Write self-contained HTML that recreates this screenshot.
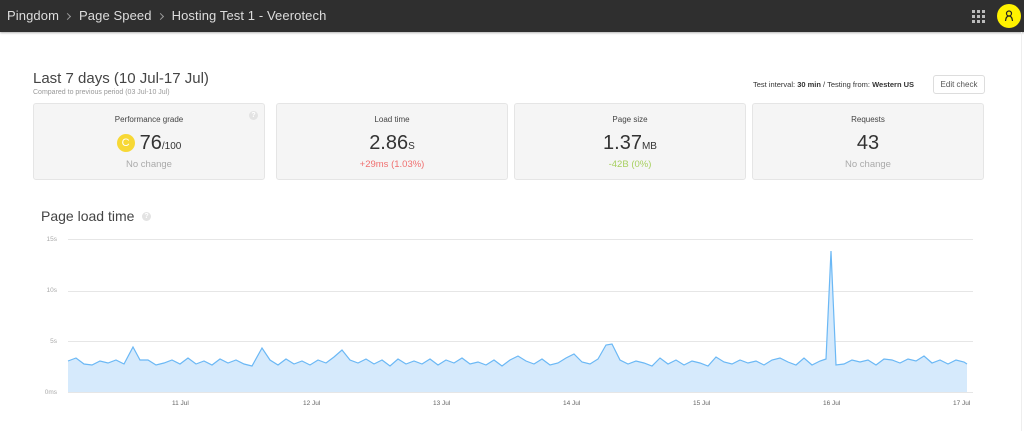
<!DOCTYPE html>
<html><head><meta charset="utf-8"><style>
*{margin:0;padding:0;box-sizing:border-box}
body{width:1024px;height:431px;overflow:hidden;background:#fff;font-family:"Liberation Sans",sans-serif;position:relative}
.top{position:absolute;left:0;top:0;width:1024px;height:32px;background:#2f2f2f;box-shadow:0 1px 2px rgba(0,0,0,.3)}
.crumb{position:absolute;left:7px;top:8px;font-size:13px;color:#ddd;letter-spacing:.1px}
.crumb span.s{display:inline-block;width:5px;height:5px;border-top:1px solid #999;border-right:1px solid #999;transform:rotate(45deg);margin:0 9px 1px 6px;vertical-align:middle}
.grid{position:absolute;left:972px;top:10px;width:13px;height:13px}
.grid i{position:absolute;width:3px;height:3px;background:#bbb}
.av{position:absolute;left:997px;top:4px;width:24px;height:24px;border-radius:50%;background:#fff200}
.t1{position:absolute;left:33px;top:70px;font-size:15px;color:#444}
.t2{position:absolute;left:33px;top:89px;font-size:7px;color:#999}
.ti{position:absolute;left:753px;top:80px;font-size:7.5px;color:#333}
.btn{position:absolute;left:933px;top:75px;width:52px;height:19px;border:1px solid #ddd;border-radius:3px;font-size:8px;color:#555;text-align:center;line-height:17px}
.card{position:absolute;top:103px;width:232px;height:77px;background:#f5f5f5;border:1px solid #e5e5e5;border-radius:3px;text-align:center}
.card .h{position:absolute;top:11px;width:100%;font-size:8px;color:#444}
.card .v{position:absolute;top:28px;width:100%;font-size:20px;color:#333}
.card .v small{font-size:10px}
.card .c{position:absolute;top:55px;width:100%;font-size:9.5px;color:#aaa}
.plt{position:absolute;left:41px;top:208px;font-size:14px;color:#444}
.q{position:absolute;width:9px;height:9px;border-radius:50%;background:#e3e3e3;color:#fff;font-size:7px;font-weight:bold;line-height:9px;text-align:center}
.yl{position:absolute;font-size:6.5px;color:#aaa;right:967px}
.xl{position:absolute;top:400px;font-size:6.5px;color:#666}
</style></head><body>
<div class="top">
<div class="crumb">Pingdom<span class="s"></span>Page Speed<span class="s"></span>Hosting Test 1 - Veerotech</div>
<div class="grid"><i style="left:0;top:0"></i><i style="left:5px;top:0"></i><i style="left:10px;top:0"></i><i style="left:0;top:5px"></i><i style="left:5px;top:5px"></i><i style="left:10px;top:5px"></i><i style="left:0;top:10px"></i><i style="left:5px;top:10px"></i><i style="left:10px;top:10px"></i></div>
<div class="av"><svg width="24" height="24"><circle cx="12" cy="9.5" r="2.5" fill="none" stroke="#222" stroke-width="1.2"/><path d="M8.5 17 Q9 12 12 12 Q15 12 15.5 17" fill="none" stroke="#222" stroke-width="1.2"/></svg></div>
</div>
<div style="position:absolute;left:1021px;top:32px;width:1px;height:399px;background:#eee"></div>
<div class="t1">Last 7 days (10 Jul-17 Jul)</div>
<div class="t2">Compared to previous period (03 Jul-10 Jul)</div>
<div class="ti">Test interval: <b>30 min</b> / Testing from: <b>Western US</b></div>
<div class="btn">Edit check</div>
<div class="card" style="left:33px"><div class="h">Performance grade</div>
<div class="q" style="right:6px;top:7px">?</div>
<div class="v"><span style="display:inline-block;width:18px;height:18px;border-radius:50%;background:#f7d835;color:#fff;font-size:11px;line-height:18px;vertical-align:3px;margin-right:5px">C</span>76<small>/100</small></div>
<div class="c">No change</div></div>
<div class="card" style="left:276px"><div class="h">Load time</div><div class="v">2.86<small>S</small></div><div class="c" style="color:#f07070">+29ms (1.03%)</div></div>
<div class="card" style="left:514px"><div class="h">Page size</div><div class="v">1.37<small>MB</small></div><div class="c" style="color:#a8d060">-42B (0%)</div></div>
<div class="card" style="left:752px"><div class="h">Requests</div><div class="v">43</div><div class="c">No change</div></div>
<div class="plt">Page load time</div><div class="q" style="left:142px;top:212px">?</div>
<div class="yl" style="top:236px">15s</div><div class="yl" style="top:287px">10s</div><div class="yl" style="top:338px">5s</div><div class="yl" style="top:389px">0ms</div>
<svg style="position:absolute;left:0;top:0" width="1024" height="431">
<g stroke="#e6e6e6" stroke-width="1"><line x1="68" x2="973" y1="239.5" y2="239.5"/><line x1="68" x2="973" y1="291.5" y2="291.5"/><line x1="68" x2="973" y1="341.5" y2="341.5"/><line x1="68" x2="973" y1="392.5" y2="392.5"/></g>
<polygon fill="#d6eafc" points="68,392 68,361 76,358 84,364 92,365 100,361 108,363 116,360 124,364 133,347 140,360 148,360 156,365 164,363 172,360 180,364 188,358 196,364 204,361 212,365 220,359 228,363 236,360 244,364 252,366 262,348 270,360 278,365 286,359 294,364 302,361 310,365 318,360 326,363 334,357 342,350 350,360 358,363 366,359 374,364 382,360 390,366 398,359 406,364 414,361 422,364 430,359 438,365 446,360 454,363 462,358 470,364 478,362 486,365 494,360 502,366 510,360 518,356 526,361 534,364 542,359 550,365 558,363 566,358 574,354 582,362 590,364 598,359 606,345 612,344 620,360 628,364 636,361 644,363 652,366 660,358 668,364 676,360 684,365 692,361 700,363 708,366 716,357 724,362 732,364 740,360 748,363 756,361 764,365 772,360 780,358 788,362 796,365 804,358 812,365 820,361 826,359 831,251 836,365 844,364 852,360 860,362 868,360 876,365 884,359 892,360 900,363 908,359 916,361 924,356 932,363 940,360 948,364 956,360 964,362 967,364 967,392"/>
<polyline fill="none" stroke="#6bb8f5" stroke-width="1.2" points="68,361 76,358 84,364 92,365 100,361 108,363 116,360 124,364 133,347 140,360 148,360 156,365 164,363 172,360 180,364 188,358 196,364 204,361 212,365 220,359 228,363 236,360 244,364 252,366 262,348 270,360 278,365 286,359 294,364 302,361 310,365 318,360 326,363 334,357 342,350 350,360 358,363 366,359 374,364 382,360 390,366 398,359 406,364 414,361 422,364 430,359 438,365 446,360 454,363 462,358 470,364 478,362 486,365 494,360 502,366 510,360 518,356 526,361 534,364 542,359 550,365 558,363 566,358 574,354 582,362 590,364 598,359 606,345 612,344 620,360 628,364 636,361 644,363 652,366 660,358 668,364 676,360 684,365 692,361 700,363 708,366 716,357 724,362 732,364 740,360 748,363 756,361 764,365 772,360 780,358 788,362 796,365 804,358 812,365 820,361 826,359 831,251 836,365 844,364 852,360 860,362 868,360 876,365 884,359 892,360 900,363 908,359 916,361 924,356 932,363 940,360 948,364 956,360 964,362 967,364"/>
</svg>
<div class="xl" style="left:172px">11 Jul</div><div class="xl" style="left:303px">12 Jul</div><div class="xl" style="left:433px">13 Jul</div><div class="xl" style="left:563px">14 Jul</div><div class="xl" style="left:693px">15 Jul</div><div class="xl" style="left:823px">16 Jul</div><div class="xl" style="left:953px">17 Jul</div>
</body></html>
